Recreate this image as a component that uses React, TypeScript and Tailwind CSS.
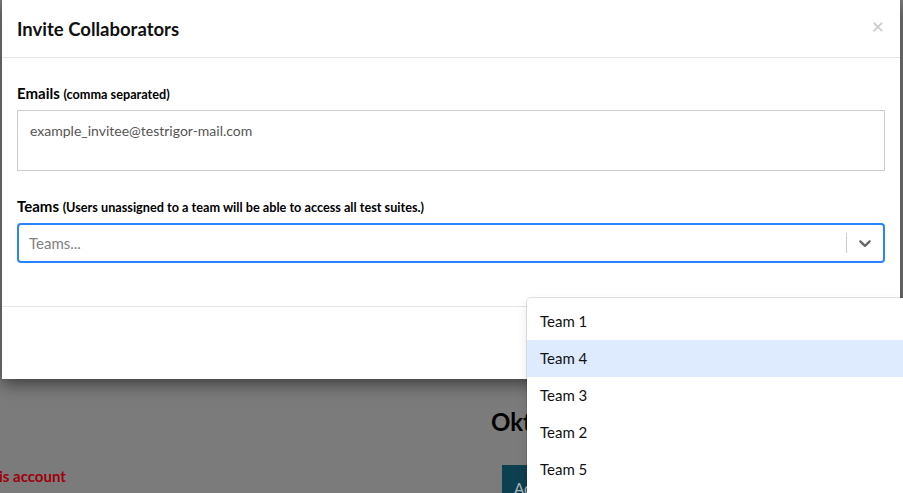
import React from 'react';

const teams = ['Team 1', 'Team 4', 'Team 3', 'Team 2', 'Team 5'];

function Chevron() {
  return (
    <svg viewBox="0 0 20 20" className="w-5 h-5 fill-[#666]">
      <path d="M4.516 7.548c0.436-0.446 1.043-0.481 1.576 0l3.908 3.747 3.908-3.747c0.533-0.481 1.141-0.446 1.574 0 0.436 0.445 0.408 1.197 0 1.615-0.406 0.418-4.695 4.502-4.695 4.502-0.217 0.223-0.502 0.335-0.787 0.335s-0.57-0.112-0.789-0.335c0 0-4.287-4.084-4.695-4.502s-0.436-1.17 0-1.615z" />
    </svg>
  );
}

export default function App() {
  return (
    <div
      className="relative w-[903px] h-[493px] overflow-hidden bg-[#7b7b7b]"
      style={{ fontFamily: 'Lato, "Open Sans", sans-serif' }}
    >
      {/* Page behind the overlay */}
      <div className="pt-[406px]">
        <h2 className="pl-[491px] text-[24px] font-bold text-black leading-[32px]">Okta</h2>
        <div className="flex items-start mt-[27px]">
          <span className="ml-[-1px] mt-[1px] text-[15px] font-bold text-[#a0000a] leading-[20px] w-[503px]">is account</span>
          <div className="w-[120px] h-[40px] bg-[#0c3f4f] text-[#a9b6bb] text-[15px] pl-[12px] pt-[12px]">
            Add
          </div>
        </div>
      </div>

      {/* Modal */}
      <div className="absolute left-[2px] top-0 w-[898px] h-[379px] bg-white shadow-[0_5px_15px_rgba(0,0,0,0.5)] flex flex-col">
        <div className="flex items-center justify-between h-[58px] px-[15px] border-b border-[#e5e5e5]">
          <h4 className="text-[18.5px] font-bold text-[#111] leading-[26px]">Invite Collaborators</h4>
          <span className="text-[21px] font-bold text-black/20 leading-none mr-[1px] mt-[-6px]">×</span>
        </div>
        <div className="px-[15px] pt-[25px] flex-1">
          <label className="block text-[15px] font-bold text-black leading-[21px] mb-[5px]">
            Emails <span className="text-[12.7px]">(comma separated)</span>
          </label>
          <div className="h-[61px] border border-[#ccc] px-[12px] pt-[10px] text-[14px] text-[#555] leading-[20px]">
            example_invitee@testrigor-mail.com
          </div>
          <label className="block mt-[25px] text-[15px] font-bold text-black leading-[21px] mb-[5px]">
            Teams <span className="text-[12.7px]">(Users unassigned to a team will be able to access all test suites.)</span>
          </label>
          <div className="h-[40px] border-2 border-[#2684ff] rounded-[4px] flex items-center">
            <span className="flex-1 pl-[10px] text-[15px] text-[#808080]">Teams...</span>
            <span className="w-px h-[20px] bg-[#ccc]" />
            <span className="px-[8px] flex items-center">
              <Chevron />
            </span>
          </div>
        </div>
        <div className="h-[73px] border-t border-[#e5e5e5]" />
      </div>

      {/* Dropdown menu */}
      <div className="absolute left-[527px] top-[298px] w-[420px] h-[220px] bg-white rounded-[4px] shadow-[0_0_0_1px_rgba(0,0,0,0.1),0_4px_11px_rgba(0,0,0,0.1)] pt-[5px]">
        {teams.map((t, i) => (
          <div
            key={t}
            className={`h-[37px] flex items-center px-[13px] text-[15px] text-[#111] ${i === 1 ? 'bg-[#deebff]' : ''}`}
          >
            {t}
          </div>
        ))}
      </div>
    </div>
  );
}
